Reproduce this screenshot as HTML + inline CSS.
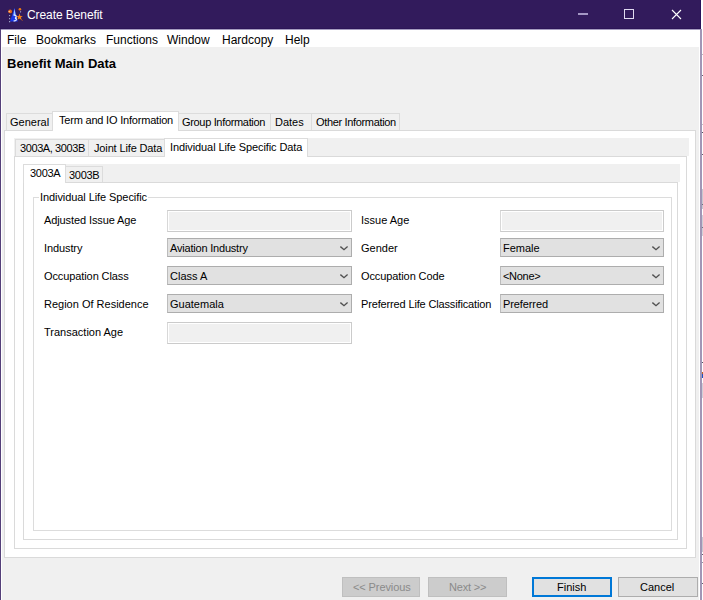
<!DOCTYPE html><html><head><meta charset="utf-8"><style>
*{box-sizing:border-box;}
html,body{margin:0;padding:0;}
body{width:703px;height:600px;position:relative;overflow:hidden;background:#ffffff;font-family:"Liberation Sans",sans-serif;color:#000;}
div{position:absolute;}
.t{white-space:nowrap;font-size:11px;line-height:normal;}
.m{white-space:nowrap;font-size:12px;top:33px;}
.tab{background:#f0f0f0;border:1px solid #dcdcdc;border-bottom:none;}
.sel{background:#fff;}
.pn{background:#fff;border:1px solid #dadada;}
.strip{background:#f0f0f0;}
.tb{height:22px;border:1px solid #cbcbcb;border-left-color:#d8d8d8;background:#f0f0f0;box-shadow:inset 1px 1px 0 #fff,inset -1px -1px 0 #fff;}
.cb{height:19px;border:1px solid #adadad;border-left-color:#bcbcbc;background:#e1e1e1;}
.btn{top:577px;height:20px;}
</style></head><body>
<div style="left:0;top:0;width:701px;height:29px;background:#321b5c;"></div>
<div style="left:0;top:28px;width:701px;height:1px;background:#2c1557;"></div>
<div style="left:0;top:29px;width:1px;height:571px;background:#544079;"></div>
<div style="left:700px;top:29px;width:2px;height:571px;background:#a196b6;"></div>
<div style="left:700px;top:0;width:1px;height:29px;background:#28125a;"></div>
<div style="left:702px;top:54px;width:1px;height:1px;background:#b8b8c0;"></div>
<div style="left:702px;top:75px;width:1px;height:1px;background:#606070;"></div>
<div style="left:702px;top:124px;width:1px;height:1px;background:#c0c0c8;"></div>
<div style="left:702px;top:132px;width:1px;height:1px;background:#505060;"></div>
<div style="left:702px;top:154px;width:1px;height:1px;background:#606070;"></div>
<div style="left:702px;top:189px;width:1px;height:20px;background:#c8c8d0;"></div>
<div style="left:702px;top:204px;width:1px;height:1px;background:#707080;"></div>
<div style="left:702px;top:215px;width:1px;height:21px;background:#d0d0d8;"></div>
<div style="left:702px;top:227px;width:1px;height:1px;background:#707080;"></div>
<div style="left:702px;top:362px;width:1px;height:1px;background:#505060;"></div>
<div style="left:702px;top:372px;width:1px;height:2px;background:#c06020;"></div>
<div style="left:702px;top:374px;width:1px;height:4px;background:#2050c0;"></div>
<div style="left:702px;top:383px;width:1px;height:15px;background:#d0d0d8;"></div>
<div style="left:702px;top:537px;width:1px;height:15px;background:#c8c8d0;"></div>
<div style="left:702px;top:554px;width:1px;height:1px;background:#606070;"></div>
<div style="left:702px;top:562px;width:1px;height:1px;background:#9090a0;"></div>
<div style="left:702px;top:583px;width:1px;height:1px;background:#606070;"></div>
<div style="left:1px;top:29px;width:699px;height:18px;background:#fff;"></div>
<div style="left:1px;top:29px;width:699px;height:1px;background:#a69dc0;"></div>
<div style="left:1px;top:47px;width:699px;height:553px;background:#f0f0f0;"></div>
<div style="left:1px;top:47px;width:1px;height:553px;background:#ffffff;"></div>
<div style="left:699px;top:47px;width:1px;height:553px;background:#ffffff;"></div>
<svg style="position:absolute;left:8px;top:7px" width="16" height="16" viewBox="0 0 16 16">
<path d="M6.5 0.8 L9.8 14.6 L2.0 14.6 Z" fill="#1838e8"/>
<path d="M6.5 1.5 L7.6 8 L5.4 8 Z" fill="#9cc4ff"/>
<path d="M5.6 8.3 Q8.4 7.8 8.2 10 Q7.9 10.9 7 11 Q8.6 11.3 8.3 12.9 Q7.9 14.2 5.6 13.8" fill="none" stroke="#e8f0ff" stroke-width="1.3"/>
<circle cx="2.1" cy="4.4" r="1.9" fill="#f06a10"/>
<circle cx="1.2" cy="4.6" r="0.7" fill="#f0e0d0"/>
<circle cx="11.9" cy="2.3" r="1.3" fill="#f07a10"/>
<circle cx="12.6" cy="4.8" r="0.6" fill="#c0c8e8"/>
<path d="M14.6 13.9 L11.8 11" stroke="#a05030" stroke-width="0.9"/>
<path d="M11.5 6.6 l0.9 2.3 2.3 0.1 -1.8 1.5 .7 2.3 -2.1-1.3 -2.1 1.3 .7-2.3 -1.8-1.5 2.3-.1z" fill="#f08018"/>
<circle cx="1.6" cy="8.6" r=".65" fill="#b0b8d8"/>
<circle cx="1.6" cy="11.7" r=".65" fill="#b0b8d8"/>
<circle cx="1.6" cy="14.7" r=".65" fill="#b0b8d8"/>
</svg>
<div class="t" style="left:27px;top:8px;font-size:12px;color:#fff;letter-spacing:-0.08px;">Create Benefit</div>
<div style="left:578px;top:13px;width:10px;height:2px;background:#a497c4;"></div>
<div style="left:624px;top:9px;width:10px;height:10px;border:1px solid #e0daf0;"></div>
<svg style="position:absolute;left:671px;top:9px" width="11" height="11" viewBox="0 0 11 11"><path d="M1 1 L10 10 M10 1 L1 10" stroke="#fff" stroke-width="1.1"/></svg>
<div class="m" style="left:7px">File</div>
<div class="m" style="left:36px">Bookmarks</div>
<div class="m" style="left:106px">Functions</div>
<div class="m" style="left:167px">Window</div>
<div class="m" style="left:222px">Hardcopy</div>
<div class="m" style="left:285px">Help</div>
<div class="t" style="left:7px;top:56px;font-size:13px;font-weight:bold;">Benefit Main Data</div>
<div class="pn" style="left:4px;top:130px;width:692px;height:428px;"></div>
<div class="tab" style="left:6px;top:113px;width:47px;height:17px;"></div>
<div class="tab" style="left:178px;top:113px;width:93px;height:17px;"></div>
<div class="tab" style="left:270px;top:113px;width:42px;height:17px;"></div>
<div class="tab" style="left:311px;top:113px;width:89px;height:17px;"></div>
<div class="tab sel" style="left:52px;top:111px;width:127px;height:20px;"></div>
<div class="t" style="left:10px;top:116px;">General</div>
<div class="t" style="left:59px;top:114px;letter-spacing:-0.2px;">Term and IO Information</div>
<div class="t" style="left:182px;top:116px;letter-spacing:-0.33px;">Group Information</div>
<div class="t" style="left:275px;top:116px;">Dates</div>
<div class="t" style="left:316px;top:116px;letter-spacing:-0.34px;">Other Information</div>
<div class="strip" style="left:14px;top:138px;width:675px;height:18px;"></div>
<div class="pn" style="left:14px;top:156px;width:673px;height:393px;"></div>
<div class="tab" style="left:15px;top:139px;width:74px;height:17px;"></div>
<div class="tab" style="left:88px;top:139px;width:77px;height:17px;"></div>
<div class="tab sel" style="left:164px;top:138px;width:144px;height:19px;"></div>
<div class="t" style="left:20px;top:142px;letter-spacing:-0.4px;">3003A, 3003B</div>
<div class="t" style="left:94px;top:142px;letter-spacing:-0.14px;">Joint Life Data</div>
<div class="t" style="left:170px;top:141px;letter-spacing:-0.1px;">Individual Life Specific Data</div>
<div class="strip" style="left:23px;top:164px;width:657px;height:18px;"></div>
<div class="pn" style="left:23px;top:182px;width:655px;height:358px;"></div>
<div class="tab" style="left:64px;top:166px;width:39px;height:16px;"></div>
<div class="tab sel" style="left:23px;top:164px;width:43px;height:19px;"></div>
<div class="t" style="left:30px;top:167px;letter-spacing:-0.3px;">3003A</div>
<div class="t" style="left:69px;top:169px;letter-spacing:-0.3px;">3003B</div>
<div style="left:33px;top:197px;width:639px;height:334px;border:1px solid #dcdcdc;"></div>
<div class="t" style="left:39px;top:191px;background:#fff;padding:0 1px 0 1px;letter-spacing:-0.08px;">Individual Life Specific</div>
<div class="t" style="left:44px;top:214px;letter-spacing:-0.1px;">Adjusted Issue Age</div>
<div class="t" style="left:44px;top:242px;letter-spacing:-0.1px;">Industry</div>
<div class="t" style="left:44px;top:270px;letter-spacing:-0.1px;">Occupation Class</div>
<div class="t" style="left:44px;top:298px;letter-spacing:0px;">Region Of Residence</div>
<div class="t" style="left:44px;top:326px;letter-spacing:0px;">Transaction Age</div>
<div class="t" style="left:361px;top:214px;letter-spacing:0px;">Issue Age</div>
<div class="t" style="left:361px;top:242px;letter-spacing:0px;">Gender</div>
<div class="t" style="left:361px;top:270px;letter-spacing:-0.1px;">Occupation Code</div>
<div class="t" style="left:361px;top:298px;letter-spacing:-0.15px;">Preferred Life Classification</div>
<div class="tb" style="left:167px;top:210px;width:185px;"></div>
<div class="cb" style="left:167px;top:238px;width:185px;"></div>
<div class="t" style="left:170px;top:242px;letter-spacing:-0.2px;">Aviation Industry</div>
<svg style="position:absolute;left:340px;top:246px" width="9" height="5" viewBox="0 0 9 5"><path d="M0.4 0.6 L4.0 3.7 L7.6 0.6" fill="none" stroke="#505050" stroke-width="1.35"/></svg>
<div class="cb" style="left:167px;top:266px;width:185px;"></div>
<div class="t" style="left:170px;top:270px;letter-spacing:0px;">Class A</div>
<svg style="position:absolute;left:340px;top:274px" width="9" height="5" viewBox="0 0 9 5"><path d="M0.4 0.6 L4.0 3.7 L7.6 0.6" fill="none" stroke="#505050" stroke-width="1.35"/></svg>
<div class="cb" style="left:167px;top:294px;width:185px;"></div>
<div class="t" style="left:170px;top:298px;letter-spacing:0px;">Guatemala</div>
<svg style="position:absolute;left:340px;top:302px" width="9" height="5" viewBox="0 0 9 5"><path d="M0.4 0.6 L4.0 3.7 L7.6 0.6" fill="none" stroke="#505050" stroke-width="1.35"/></svg>
<div class="tb" style="left:167px;top:322px;width:185px;"></div>
<div class="tb" style="left:500px;top:210px;width:164px;"></div>
<div class="cb" style="left:500px;top:238px;width:164px;"></div>
<div class="t" style="left:503px;top:242px;letter-spacing:0px;">Female</div>
<svg style="position:absolute;left:652px;top:246px" width="9" height="5" viewBox="0 0 9 5"><path d="M0.4 0.6 L4.0 3.7 L7.6 0.6" fill="none" stroke="#505050" stroke-width="1.35"/></svg>
<div class="cb" style="left:500px;top:266px;width:164px;"></div>
<div class="t" style="left:503px;top:270px;letter-spacing:-0.3px;">&lt;None&gt;</div>
<svg style="position:absolute;left:652px;top:274px" width="9" height="5" viewBox="0 0 9 5"><path d="M0.4 0.6 L4.0 3.7 L7.6 0.6" fill="none" stroke="#505050" stroke-width="1.35"/></svg>
<div class="cb" style="left:500px;top:294px;width:164px;"></div>
<div class="t" style="left:503px;top:298px;letter-spacing:-0.1px;">Preferred</div>
<svg style="position:absolute;left:652px;top:302px" width="9" height="5" viewBox="0 0 9 5"><path d="M0.4 0.6 L4.0 3.7 L7.6 0.6" fill="none" stroke="#505050" stroke-width="1.35"/></svg>
<div class="btn" style="left:342px;width:78px;background:#cccccc;border:1px solid #bfbfbf;"></div>
<div class="t" style="left:353px;top:581px;color:#8a8a8a;letter-spacing:-0.1px;">&lt;&lt; Previous</div>
<div class="btn" style="left:428px;width:79px;background:#cccccc;border:1px solid #bfbfbf;"></div>
<div class="t" style="left:449px;top:581px;color:#8a8a8a;letter-spacing:-0.2px;">Next &gt;&gt;</div>
<div class="btn" style="left:532px;width:80px;background:#e1e1e1;border:2px solid #0078d7;"></div>
<div class="t" style="left:557px;top:581px;">Finish</div>
<div class="btn" style="left:618px;width:80px;background:#e1e1e1;border:1px solid #adadad;"></div>
<div class="t" style="left:640px;top:581px;">Cancel</div>
</body></html>
